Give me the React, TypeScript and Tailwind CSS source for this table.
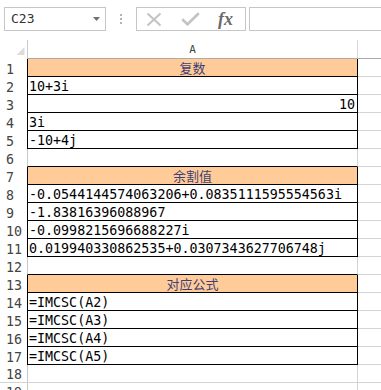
import React from "react";

type R = {
  n: number;
  text?: string;
  head?: boolean;
  right?: boolean;
  bordered: boolean;
  bottomBlack: boolean;
};

const rows: R[] = [
  { n: 1, text: "复数", head: true, bordered: true, bottomBlack: true },
  { n: 2, text: "10+3i", bordered: true, bottomBlack: true },
  { n: 3, text: "10", right: true, bordered: true, bottomBlack: true },
  { n: 4, text: "3i", bordered: true, bottomBlack: true },
  { n: 5, text: "-10+4j", bordered: true, bottomBlack: true },
  { n: 6, bordered: false, bottomBlack: true },
  { n: 7, text: "余割值", head: true, bordered: true, bottomBlack: true },
  { n: 8, text: "-0.0544144574063206+0.0835111595554563i", bordered: true, bottomBlack: true },
  { n: 9, text: "-1.83816396088967", bordered: true, bottomBlack: true },
  { n: 10, text: "-0.0998215696688227i", bordered: true, bottomBlack: true },
  { n: 11, text: "0.019940330862535+0.0307343627706748j", bordered: true, bottomBlack: true },
  { n: 12, bordered: false, bottomBlack: true },
  { n: 13, text: "对应公式", head: true, bordered: true, bottomBlack: true },
  { n: 14, text: "=IMCSC(A2)", bordered: true, bottomBlack: true },
  { n: 15, text: "=IMCSC(A3)", bordered: true, bottomBlack: true },
  { n: 16, text: "=IMCSC(A4)", bordered: true, bottomBlack: true },
  { n: 17, text: "=IMCSC(A5)", bordered: true, bottomBlack: true },
  { n: 18, bordered: false, bottomBlack: false },
  { n: 19, bordered: false, bottomBlack: false },
];

const mono = "font-['DejaVu_Sans_Mono',monospace]";

function Row({ r }: { r: R }) {
  const leftCls = r.bordered ? "border-l-black" : "border-l-[#c8c8c8]";
  const rightCls = r.bordered ? "border-r-black" : "border-r-[#d4d4d4]";
  const bottomCls = r.bottomBlack ? "border-b-black" : "border-b-[#d4d4d4]";
  const bg = r.head ? "bg-[#ffcc99]" : "bg-white";
  return (
    <div className="flex h-[18px] flex-none">
      <div
        className={`w-[27px] flex-none flex items-end pl-[6px] text-[13.33px] leading-[14px] text-[#444] ${mono} ${
          r.bottomBlack ? "" : "border-b border-b-[#d4d4d4]"
        }`}
      >
        {r.n}
      </div>
      <div
        className={`w-[331px] flex-none border-l border-r border-b ${leftCls} ${rightCls} ${bottomCls} ${bg} flex items-end ${
          r.head ? "justify-center pb-[1px]" : r.right ? "justify-end pr-[2px]" : "pl-[1px]"
        }`}
      >
        {r.text &&
          (r.head ? (
            <span className="text-[13px] leading-[14px] text-[#3f3f76] font-['Noto_Sans_CJK_SC',sans-serif]">
              {r.text}
            </span>
          ) : (
            <span className={`text-[13.33px] leading-[14px] text-black whitespace-nowrap ${mono}`}>{r.text}</span>
          ))}
      </div>
      <div className="flex-1 border-b border-b-[#d4d4d4]" />
    </div>
  );
}

export default function App() {
  return (
    <div className="w-[381px] h-[390px] overflow-hidden bg-white flex flex-col">
      {/* formula bar */}
      <div className="h-[40px] flex-none flex items-start pt-[7px]">
        <div className="ml-[4px] w-[102px] h-[24px] flex-none border border-[#c6c6c6] flex items-center justify-between pl-[6px] pr-[5px]">
          <span className={`text-[13px] leading-[14px] text-[#333] ${mono}`}>C23</span>
          <svg width="7" height="4" viewBox="0 0 7 4">
            <polygon points="0,0 7,0 3.5,4" fill="#707070" />
          </svg>
        </div>
        <div className="ml-[14px] mt-[7px] flex flex-col gap-[2px] flex-none">
          <div className="w-[2px] h-[2px] bg-[#b4b4b4]" />
          <div className="w-[2px] h-[2px] bg-[#b4b4b4]" />
          <div className="w-[2px] h-[2px] bg-[#b4b4b4]" />
        </div>
        <div className="ml-[14px] w-[110px] h-[24px] flex-none border border-[#c6c6c6] flex items-center pl-[9px]">
          <svg width="16" height="15" viewBox="0 0 16 15" className="flex-none">
            <path d="M1.5 1.5 L14.5 13.5 M14.5 1.5 L1.5 13.5" stroke="#c3c3c3" strokeWidth="2" fill="none" />
          </svg>
          <svg width="19" height="14" viewBox="0 0 19 14" className="ml-[19px] flex-none">
            <path d="M1.2 7.2 L6.5 12.3 L17.8 1.2" stroke="#c3c3c3" strokeWidth="2.6" fill="none" />
          </svg>
          <span className="ml-[18px] text-[18px] leading-[18px] italic font-bold text-[#6b6b6b] font-['Liberation_Serif',serif]">
            fx
          </span>
        </div>
        <div className="ml-[3px] w-[200px] h-[24px] flex-none border border-[#c6c6c6]" />
      </div>

      {/* column header */}
      <div className="flex h-[19px] flex-none">
        <div className="w-[27px] flex-none relative">
          <svg width="27" height="19" viewBox="0 0 27 19" className="absolute left-0 top-0">
            <polygon points="24.5,7 24.5,15 16.5,15" fill="#dcdcdc" />
          </svg>
        </div>
        <div className="w-[331px] flex-none border-l border-l-[#c8c8c8] border-r border-r-[#d8d8d8] border-b border-b-[#ababab] flex items-end justify-center pb-[2px]">
          <span className={`text-[11px] leading-[12px] text-[#444] ${mono}`}>A</span>
        </div>
        <div className="flex-1 border-b border-b-[#ababab]" />
      </div>

      {rows.map((r) => (
        <Row key={r.n} r={r} />
      ))}
    </div>
  );
}
